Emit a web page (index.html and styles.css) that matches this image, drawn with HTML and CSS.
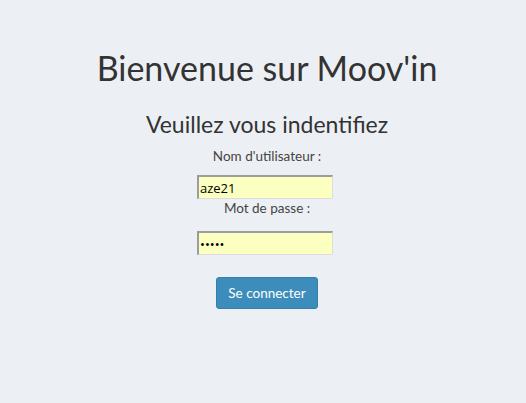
FILE: index.html
```html
<!DOCTYPE html>
<html lang="fr">
<head>
<meta charset="utf-8">
<title>Moov'in</title>
<link rel="stylesheet" href="styles.css">
</head>
<body>
<main class="login">
  <h1 class="title">Bienvenue sur Moov'in</h1>
  <h3 class="subtitle">Veuillez vous indentifiez</h3>
  <form class="form">
    <label class="label" for="user">Nom d'utilisateur :</label>
    <input class="field" id="user" type="text" value="aze21">
    <label class="label label-pass" for="pass">Mot de passe :</label>
    <input class="field" id="pass" type="password" value="aze21">
    <button class="btn" type="button">Se connecter</button>
  </form>
</main>
</body>
</html>
```
FILE: styles.css
```css
html, body {
  margin: 0;
  padding: 0;
  background: #ecf0f5;
}
body {
  font-family: Lato, "Open Sans", sans-serif;
  color: #333;
  width: 526px;
  height: 403px;
}
.login {
  display: flex;
  flex-direction: column;
  align-items: center;
  padding-top: 48px;
  padding-left: 8px;
}
.title {
  margin: 0;
  font-size: 34px;
  font-weight: 400;
  line-height: 40px;
  color: #333;
}
.subtitle {
  margin: 22px 0 0 0;
  font-size: 23px;
  font-weight: 400;
  line-height: 28px;
  color: #333;
}
.form {
  display: flex;
  flex-direction: column;
  align-items: center;
  margin-top: 9px;
}
.label {
  font-size: 13.5px;
  line-height: 18px;
  color: #444;
  margin-bottom: 10px;
}
.label-pass {
  margin-bottom: 14px;
}
.field {
  box-sizing: border-box;
  width: 136px;
  height: 24px;
  margin: 0 0 0 -4px;
  padding: 0 1px;
  background: #fbffbf;
  border: 2px solid #9c9c9c;
  border-right: 1px solid #dcdcdc;
  border-bottom: 1px solid #dcdcdc;
  font-family: "Open Sans", sans-serif;
  font-size: 13px;
  color: #000;
}
.btn {
  margin-top: 22px;
  width: 102px;
  height: 32px;
  background: #3c8dbc;
  border: 1px solid #367fa9;
  border-radius: 3px;
  color: #fff;
  font-family: Lato, sans-serif;
  font-size: 13.5px;
}
```
